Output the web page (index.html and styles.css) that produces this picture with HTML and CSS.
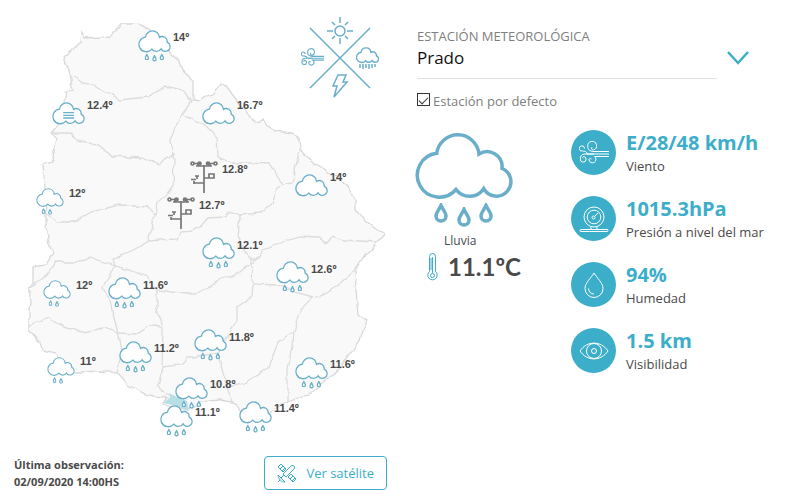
FILE: index.html
```
<!DOCTYPE html>
<html lang="es">
<head>
  <meta charset="UTF-8">
  <meta name="viewport" content="width=device-width, initial-scale=1">
  <title>Estado del tiempo</title>
  <link rel="stylesheet" href="styles.css">
</head>
<body>

  <!-- Icons shared by the map and the station panel -->
  <svg class="sprite" aria-hidden="true">
    <symbol id="cloud" viewBox="0 0 98 96">
      <path class="cloud" d="M21.7 21.3A22 22 0 1 0 41 57.5A17 17 0 0 0 68.7 56.7A14.5 14.5 0 1 0 87 36.3A15 15 0 0 0 64 22A21.3 21.3 0 0 0 21.7 21.3Z"/>
    </symbol>
    <symbol id="drop" viewBox="0 0 14 20">
      <path d="M7 2.500C5.500 6 2 9.500 2 13a5 5 0 0 0 10 0C12 9.500 8.500 6 7 2.500Z"/>
    </symbol>
    <symbol id="rain" viewBox="0 0 98 96">
      <use href="#cloud" width="98" height="96"/>
      <use href="#drop" x="19" y="71" width="14" height="20"/>
      <use href="#drop" x="42" y="75" width="14" height="20"/>
      <use href="#drop" x="64" y="71" width="14" height="20"/>
    </symbol>
    <symbol id="drizzle" viewBox="0 0 98 96">
      <use href="#cloud" width="98" height="96"/>
      <use href="#drop" x="19" y="72" width="14" height="20"/>
      <use href="#drop" x="42" y="75" width="14" height="20"/>
    </symbol>
    <symbol id="fog" viewBox="0 0 98 96">
      <use href="#cloud" width="98" height="96"/>
      <path d="M33 32H66M33 40H66M33 48H66"/>
    </symbol>
    <symbol id="tower" viewBox="0 0 28 32">
      <path d="M14 4V32M6 5H22M8 2V5M20 2V5M4 22H14M4 20V23M14 17H20M19 13H24V17H19ZM1 18.500H6M5 15H9M7 15V18"/>
      <path d="M3 2.500H11M17 2.500H25"/>
      <circle cx="2.500" cy="2.500" r="1.500"/><circle cx="9.500" cy="2.500" r="1.500"/>
      <circle cx="18" cy="2.500" r="1.500"/><circle cx="25.500" cy="2.500" r="1.500"/>
    </symbol>
    <symbol id="wind" viewBox="0 0 30 24">
      <path d="M30 10.500H15C10.500 10.500 8.500 8 8.800 5.500A4.400 4.400 0 1 1 14.500 9C12.500 9 12 7 13 6.200"/>
      <path d="M30 13H8C7.500 9.500 5.500 10.500 3.500 10A2.600 2.600 0 1 1 5.500 7.500"/>
      <path d="M30 15.500H15.500A3.500 3.500 0 1 1 10 18.800C10 17.500 11.500 17 12.500 18"/>
      <path d="M15 13H6C2.500 13 1 15.500 1.300 18A2.900 2.900 0 1 0 5 15.500C4 15.500 3.500 16.500 4 17.200"/>
    </symbol>
  </svg>

  <main class="weather">
    <section class="map-column">
      <svg class="map" viewBox="14 0 373 450" role="img" aria-label="Mapa de temperaturas">
        <defs>
          <filter id="coast" x="0" y="0" width="100%" height="100%">
            <feTurbulence type="fractalNoise" baseFrequency="0.12" numOctaves="1" seed="4"/>
            <feDisplacementMap in="SourceGraphic" scale="6" xChannelSelector="R" yChannelSelector="G"/>
          </filter>
        </defs>

        <g filter="url(#coast)">
          <path class="country" d="M117 27L121 23H135L141 25L150 31L161 42L170 53L180 62L184 72L193 80V100L200 101L213 93L221 83L227 87L235 98L243 107L250 117L259 123L263 118L267 126L275 131L292 133L299 138L300 149L313 162L327 172L337 176L347 185L355 200V210L367 222L377 230L385 233L384 237L377 242L373 250L363 258L355 270L356 290L358 315L368 321L362 330L358 343L347 357L338 372L323 382L313 392L288 402L267 413L250 418L240 410L232 402L220 400L200 402L187 410L175 407L163 403L167 398L147 395L128 385L117 373L100 371L83 372L70 372L60 360L55 353L43 350L40 342L29 330V310L31 293L28 287L33 283V267L45 265L53 253L48 240L46 223L45 187L43 165L53 162L52 157L56 138L51 133L58 125L63 107L66 92L73 91L70 75L64 57L72 50L80 43L81 31L85 38L100 37L111 36Z"/>
          <g class="borders">
            <path d="M70 75L83 83L92 85L107 93L120 100L147 97L157 92L165 86L183 90L192 101L182 114L170 140L174 160L173 187L157 203L155 215L148 240"/>
            <path d="M51 133L72 133L77 140L97 145L113 156L141 158L160 165L167 157L175 155"/>
            <path d="M46 213L57 222L73 222L90 212L120 205L148 207L155 214"/>
            <path d="M182 114L193 119L207 127L217 137L218 157L230 162L250 162L270 163L277 175L283 185L292 183L294 173L300 150"/>
            <path d="M283 185L277 188L273 202L260 213L240 215L230 211L225 217L208 218L200 227L193 231L180 232L177 239L148 241L133 250L113 260L115 266"/>
            <path d="M240 215L238 237L243 250L250 258H258L263 250L283 242L300 237L317 238L327 243L332 236L343 240L377 242"/>
            <path d="M258 258L240 273L220 280L200 292L187 294L157 290L147 277L130 270L115 266L90 257L80 262L55 262L50 272L42 280L28 287"/>
            <path d="M115 266L102 287L110 300L112 310L118 333L122 350L117 373"/>
            <path d="M29 325L50 318L63 327L83 332L103 328L118 333L137 334L153 324L163 327"/>
            <path d="M157 290V310L163 327L162 367L158 387L167 395"/>
            <path d="M162 367L180 365L187 358L197 356L218 353L223 373L227 387L232 402"/>
            <path d="M227 387L240 385L267 370L278 343L293 332L292 345L288 370V402"/>
            <path d="M293 332L300 310L313 297L328 292L335 287L350 275L355 270"/>
            <path d="M252 258V267L253 284L277 285L298 293L313 297"/>
            <path d="M253 284L252 297L237 307V320L225 340L218 353"/>
          </g>
        </g>
        <path class="montevideo" d="M163 403L170 398L169 393L175 396L187 401L189 411L177 406Z"/>

        <!-- Reference cross: sun, wind, rain, storm -->
        <g class="legend">
          <path d="M310 28L370 88M370 28L310 88"/>
          <circle cx="340" cy="31" r="5"/>
          <path d="M340 17V23M340 38V44M327 31H333M347 31H353M332 22L335 25M345 36L348 39M348 22L345 25M335 36L332 39"/>
          <path d="M338 75L346 75L343 82L347 82L334 97L337 86L333 86Z"/>
          <use href="#wind" x="301" y="48" width="23" height="19"/>
          <use href="#cloud" class="legend-cloud" x="356" y="47" width="23" height="23"/>
          <path d="M360 64V68M363 64V69M366 64V68M369 64V69M372 64V68M375 64V67"/>
        </g>

        <g class="icons">
          <use href="#rain" x="138" y="30" width="33" height="32"/>
          <use href="#fog" x="52" y="102" width="33" height="32"/>
          <use href="#cloud" x="202" y="102" width="33" height="32"/>
          <use href="#drizzle" x="36" y="188" width="28" height="27"/>
          <use href="#tower" class="tower" x="190" y="161" width="28" height="32"/>
          <use href="#tower" class="tower" x="167" y="197" width="28" height="32"/>
          <use href="#cloud" x="295" y="174" width="33" height="32"/>
          <use href="#rain" x="202" y="237" width="33" height="32"/>
          <use href="#rain" x="276" y="261" width="33" height="32"/>
          <use href="#drizzle" x="43" y="280" width="28" height="27"/>
          <use href="#rain" x="108" y="277" width="33" height="32"/>
          <use href="#rain" x="194" y="329" width="33" height="32"/>
          <use href="#rain" x="119" y="341" width="33" height="32"/>
          <use href="#drizzle" x="47" y="357" width="28" height="27"/>
          <use href="#rain" x="175" y="377" width="33" height="32"/>
          <use href="#rain" x="160" y="405" width="33" height="32"/>
          <use href="#rain" x="295" y="357" width="33" height="32"/>
          <use href="#rain" x="239" y="401" width="33" height="32"/>
        </g>

        <g class="temps">
          <text x="173" y="41">14º</text>
          <text x="87" y="109">12.4º</text>
          <text x="237" y="109">16.7º</text>
          <text x="69" y="197">12º</text>
          <text x="222" y="173">12.8º</text>
          <text x="199" y="209">12.7º</text>
          <text x="330" y="181">14º</text>
          <text x="237" y="249">12.1º</text>
          <text x="311" y="273">12.6º</text>
          <text x="76" y="289">12º</text>
          <text x="143" y="289">11.6º</text>
          <text x="229" y="341">11.8º</text>
          <text x="154" y="352">11.2º</text>
          <text x="80" y="365">11º</text>
          <text x="210" y="388">10.8º</text>
          <text x="195" y="416">11.1º</text>
          <text x="330" y="368">11.6º</text>
          <text x="274" y="412">11.4º</text>
        </g>
      </svg>

      <div class="map-footer">
        <p class="updated">Última observación:<br>02/09/2020 14:00HS</p>
        <button type="button" class="satellite">
          <svg viewBox="0 0 20 20" width="20" height="20" aria-hidden="true">
            <path d="M1 4L4 1L9 6L6 9ZM3 6L6 3M5 8L8 5M11 14L14 11L19 16L16 19ZM13 16L16 13M15 18L18 15"/>
            <path d="M6 11L13 4C14 2.500 16 2 17 3C18 4 17.500 6 16 7L9 14Z"/>
            <path d="M1 12L8 19C5 19.500 1 16 1 12ZM3 17L1 19M4 15L7 12"/>
          </svg>
          Ver satélite
        </button>
      </div>
    </section>

    <section class="station-column">
      <div class="station">
        <div class="station-field">
          <label for="station">ESTACIÓN METEOROLÓGICA</label>
          <select id="station">
            <option selected>Prado</option>
          </select>
        </div>
        <svg class="chevron" viewBox="0 0 22 14" width="22" height="14" aria-hidden="true">
          <path d="M1 1L11 12L21 1"/>
        </svg>
      </div>

      <div class="default-station">
        <input type="checkbox" id="default" checked>
        <label for="default">Estación por defecto</label>
      </div>

      <div class="observation">
        <div class="current">
          <svg class="current-icon" width="98" height="96" aria-hidden="true"><use href="#rain"/></svg>
          <p class="current-state">Lluvia</p>
          <p class="current-temp">
            <svg viewBox="0 0 11 28" width="11" height="28" aria-hidden="true">
              <path d="M2.500 18.500V3.500a3 3 0 0 1 6 0V18.500a4.700 4.700 0 1 1-6 0Z"/>
              <path d="M5.500 4V20M3 6H5M3 8H5M3 10H5M3 12H5M3 14H5M3 16H5"/>
              <circle cx="5.500" cy="22.500" r="2"/>
            </svg>
            11.1ºC
          </p>
        </div>

        <ul class="readings">
          <li>
            <span class="badge">
              <svg width="30" height="24" aria-hidden="true"><use href="#wind"/></svg>
            </span>
            <div>
              <strong>E/28/48 km/h</strong>
              <span>Viento</span>
            </div>
          </li>
          <li>
            <span class="badge">
              <svg viewBox="0 0 30 26" width="30" height="26" aria-hidden="true">
                <circle cx="15" cy="11" r="10"/>
                <circle cx="15" cy="11" r="6.800"/>
                <circle cx="14.500" cy="11.500" r="1.500"/>
                <path d="M15.500 10.500L19 7M12 20.500V23.500M18 20.500V23.500"/>
                <rect x="1" y="23.500" width="28" height="2" rx="1"/>
              </svg>
            </span>
            <div>
              <strong>1015.3hPa</strong>
              <span>Presión a nivel del mar</span>
            </div>
          </li>
          <li>
            <span class="badge">
              <svg viewBox="0 0 20 26" width="20" height="26" aria-hidden="true">
                <path d="M10 1C7 6 1 11 1 16.500a9 9 0 0 0 18 0C19 11 13 6 10 1Z"/>
                <path d="M4.500 16.500C4.500 19.500 7 22 10 22"/>
              </svg>
            </span>
            <div>
              <strong>94%</strong>
              <span>Humedad</span>
            </div>
          </li>
          <li>
            <span class="badge">
              <svg viewBox="0 0 30 18" width="30" height="18" aria-hidden="true">
                <path d="M1 9C8-1.500 22-1.500 29 9C22 19.500 8 19.500 1 9Z"/>
                <circle cx="15" cy="9" r="7.500"/>
                <circle cx="15" cy="9" r="2.500"/>
              </svg>
            </span>
            <div>
              <strong>1.5 km</strong>
              <span>Visibilidad</span>
            </div>
          </li>
        </ul>
      </div>
    </section>
  </main>

</body>
</html>
```
FILE: styles.css
```
* {
  box-sizing: border-box;
}

body {
  margin: 0;
  font-family: "Open Sans", sans-serif;
  font-size: 13px;
  line-height: 20px;
  color: #4a4a4a;
  background: #fff;
}

p,
ul {
  margin: 0;
  padding: 0;
}

svg {
  fill: none;
}

.sprite {
  display: none;
}

.weather {
  display: grid;
  grid-template-columns: 1fr 1fr;
}

/* Map */

.map-column {
  padding: 0 11px 0 14px;
}

.map {
  display: block;
  width: 100%;
}

.country {
  fill: #f9f9f9;
  stroke: #d9d9d9;
  stroke-width: 1.3px;
}

.borders {
  stroke: #dcdcdc;
  stroke-width: 1.3px;
}

.montevideo {
  fill: #b9dfe6;
}

.icons {
  fill: #fff;
  stroke: #6aaeca;
  stroke-width: 4px;
}

.icons .tower {
  fill: none;
  stroke: #777;
  stroke-width: 1.7px;
}

.legend {
  stroke: #6aaeca;
  stroke-width: 1.5px;
}

.legend-cloud {
  stroke-width: 6px;
}

.temps {
  fill: #4a4a4a;
  font-family: "Liberation Sans", Arial, sans-serif;
  font-size: 11px;
  font-weight: bold;
}

.map-footer {
  display: flex;
  justify-content: space-between;
  align-items: center;
  margin-top: 6px;
}

.updated {
  font-size: 11px;
  font-weight: bold;
  line-height: 17px;
}

.satellite {
  display: flex;
  align-items: center;
  gap: 9px;
  height: 34px;
  padding: 0 12px;
  border: 1px solid #3caec9;
  border-radius: 4px;
  background: #fff;
  color: #3caec9;
  font-family: inherit;
  font-size: 13px;
}

.satellite svg {
  stroke: #3caec9;
}

/* Station */

.station-column {
  padding: 26px 14px 0 19px;
}

.station {
  display: flex;
  gap: 10px;
  margin-right: 33px;
}

.station-field {
  flex: 1;
}

.station-field label {
  display: block;
  color: #808080;
}

.station-field select {
  display: block;
  width: 100%;
  height: 33px;
  padding: 0 0 10px;
  border: 0;
  border-bottom: 1px solid #e0e0e0;
  border-radius: 0;
  background: none;
  color: #111;
  font-family: inherit;
  font-size: 17px;
  appearance: none;
}

.chevron {
  margin-top: 25px;
  stroke: #3caec9;
  stroke-width: 2.5px;
}

.default-station {
  display: flex;
  align-items: center;
  gap: 3px;
  margin-top: 12px;
  color: #808080;
}

.default-station input {
  display: grid;
  place-items: center;
  width: 13px;
  height: 13px;
  margin: 0 0 3px;
  border: 1px solid #333;
  appearance: none;
}

.default-station input:checked::before {
  content: "";
  width: 8px;
  height: 4px;
  border: solid #333;
  border-width: 0 0 1px 1px;
  transform: rotate(-45deg);
}

.observation {
  display: flex;
  gap: 42px;
  margin-top: 19px;
}

.current {
  width: 112px;
}

.current-icon {
  display: block;
  margin: 2px 0 0 -2px;
  stroke: #6aaeca;
  stroke-width: 3.5px;
}

.current-state {
  padding-left: 27px;
  font-size: 12px;
  line-height: 25px;
}

.current-temp {
  display: flex;
  align-items: center;
  gap: 10px;
  padding-left: 10px;
  font-family: Lato, sans-serif;
  font-size: 24px;
  font-weight: bold;
  line-height: 28px;
}

.current-temp svg {
  stroke: #3caec9;
}

.readings {
  display: grid;
  gap: 21px;
  list-style: none;
}

.readings li {
  display: flex;
  align-items: center;
  gap: 10px;
  height: 45px;
}

.badge {
  display: grid;
  flex: none;
  place-items: center;
  width: 45px;
  height: 45px;
  border-radius: 50%;
  background: #3caec9;
}

.badge svg {
  stroke: #fff;
}

.readings strong,
.readings div span {
  display: block;
}

.readings strong {
  color: #3caec9;
  font-size: 20px;
  line-height: 26px;
}
```
